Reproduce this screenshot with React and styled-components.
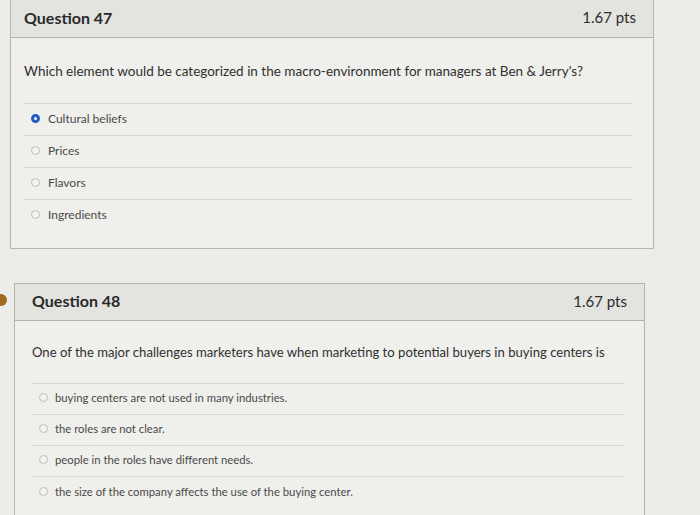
import React from 'react'
import styled, { createGlobalStyle } from 'styled-components'

const GlobalStyle = createGlobalStyle`
  html, body {
    margin: 0;
    padding: 0;
    background: #ebebe9;
    font-family: Lato, "Open Sans", sans-serif;
    overflow: hidden;
  }
`

const Page = styled.div`
  width: 700px;
  height: 515px;
  overflow: hidden;
  display: flex;
  flex-direction: column;
  gap: 34px;
  background: #ecece9;
`

const Row = styled.div`
  position: relative;
  padding-left: ${(p) => p.$left}px;
  margin-top: ${(p) => p.$top || 0}px;
`

const Marker = styled.span`
  position: absolute;
  left: -5px;
  top: 11px;
  width: 12px;
  height: 12px;
  border-radius: 50%;
  background: #a06a22;
`

const Card = styled.div`
  width: ${(p) => p.$width}px;
  border: 1px solid #b4b4b1;
  background: #efefec;
  color: #2f2f2f;
`

const Header = styled.div`
  height: ${(p) => p.$height}px;
  display: flex;
  align-items: center;
  justify-content: space-between;
  padding: 0 17px 3px ${(p) => p.$pad}px;
  box-sizing: border-box;
  background: #e3e3e0;
  border-bottom: 1px solid #b1b1ae;
`

const Title = styled.h2`
  margin: 0;
  font-size: 16px;
  font-weight: 700;
  color: #2a2a2a;
`

const Points = styled.span`
  font-size: 15px;
  font-weight: 400;
  color: #2c2c2c;
`

const Body = styled.div`
  padding: 0 20px ${(p) => p.$bottom}px ${(p) => p.$pad}px;
`

const Prompt = styled.p`
  margin: 0;
  height: ${(p) => p.$h}px;
  display: flex;
  align-items: center;
  white-space: nowrap;
  font-size: ${(p) => p.$size}px;
  color: #303030;
  border-bottom: 1px solid #d6d6d3;
`

const Options = styled.ul`
  list-style: none;
  margin: 0;
  padding: 0;
`

const Option = styled.li`
  box-sizing: border-box;
  height: ${(p) => p.$h}px;
  display: flex;
  align-items: center;
  gap: ${(p) => p.$gap}px;
  padding: 0 0 3px ${(p) => p.$indent}px;
  font-size: ${(p) => p.$size}px;
  color: #4a4a4a;
  border-bottom: 1px solid #d6d6d3;
  &:last-child {
    border-bottom: none;
  }
`

const Radio = styled.span`
  flex: none;
  box-sizing: border-box;
  width: 9px;
  height: 9px;
  border-radius: 50%;
  border: ${(p) => (p.$on ? '3px solid #1f5cc0' : '1px solid #bcbcb9')};
  background: ${(p) => (p.$on ? '#fff' : '#f3f3f1')};
`

const q47 = ['Cultural beliefs', 'Prices', 'Flavors', 'Ingredients']
const q48 = [
  'buying centers are not used in many industries.',
  'the roles are not clear.',
  'people in the roles have different needs.',
  'the size of the company affects the use of the buying center.',
]

function App() {
  return (
    <Page>
      <GlobalStyle />
      <Row $left={10} $top={-1}>
        <Card $width={642}>
          <Header $height={38} $pad={13}>
            <Title>Question 47</Title>
            <Points>1.67 pts</Points>
          </Header>
          <Body $pad={13} $bottom={16}>
            <Prompt $h={65} $size={13.5}>
              Which element would be categorized in the macro-environment for managers at Ben &amp; Jerry's?
            </Prompt>
            {/* first one is picked */}
            <Options>
              {q47.map((a, i) => (
                <Option key={a} $h={32} $gap={8} $size={12} $indent={7}>
                  <Radio $on={i === 0} />
                  {a}
                </Option>
              ))}
            </Options>
          </Body>
        </Card>
      </Row>
      <Row $left={14}>
        <Marker />
        <Card $width={629}>
          <Header $height={37} $pad={17}>
            <Title>Question 48</Title>
            <Points>1.67 pts</Points>
          </Header>
          <Body $pad={17} $bottom={20}>
            <Prompt $h={62} $size={13.1}>
              One of the major challenges marketers have when marketing to potential buyers in buying centers is
            </Prompt>
            <Options>
              {q48.map((a) => (
                <Option key={a} $h={31} $gap={7} $size={11.3} $indent={7}>
                  <Radio />
                  {a}
                </Option>
              ))}
            </Options>
          </Body>
        </Card>
      </Row>
    </Page>
  )
}

export default App
